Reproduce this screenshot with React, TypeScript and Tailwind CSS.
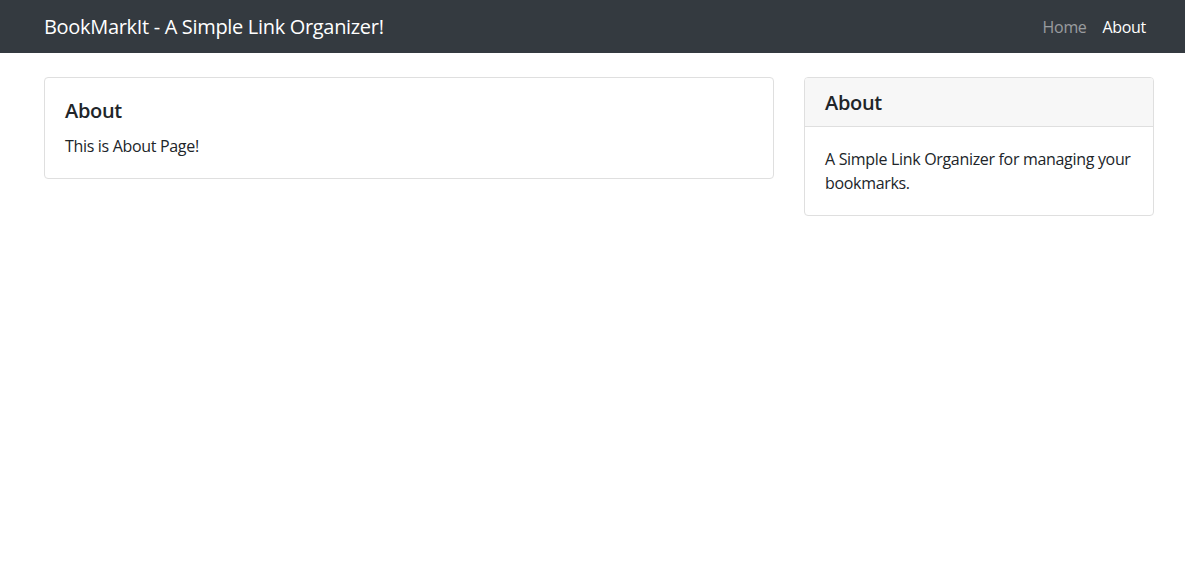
export default function App() {
  return (
    <div className="min-h-[583px] bg-white text-[#212529] font-['Open_Sans',sans-serif] tracking-[-0.02em]">
      {/* Navbar */}
      <nav className="h-[53px] bg-[#343a40] flex items-center justify-between pl-[44px] pr-[31px]">
        <a className="text-[20px] leading-[30px] text-white">BookMarkIt - A Simple Link Organizer!</a>
        <div className="flex items-center">
          <a className="px-2 text-base leading-6 text-white/50">Home</a>
          <a className="px-2 text-base leading-6 text-white">About</a>
        </div>
      </nav>

      {/* Content */}
      <div className="flex gap-[30px] pl-[44px] pt-6">
        <div className="w-[730px] self-start border border-[#dfdfdf] rounded p-5">
          <h5 className="text-[20px] leading-[26px] font-semibold mb-[10px]">About</h5>
          <p className="text-base leading-6">This is About Page!</p>
        </div>

        <div className="w-[350px] self-start border border-[#dfdfdf] rounded overflow-hidden">
          <div className="bg-[#f7f7f7] border-b border-[#dfdfdf] px-5 pt-[13px] pb-[11px]">
            <h5 className="text-[20px] leading-6 font-semibold">About</h5>
          </div>
          <div className="p-5">
            <p className="text-base leading-6">A Simple Link Organizer for managing your bookmarks.</p>
          </div>
        </div>
      </div>
    </div>
  )
}
